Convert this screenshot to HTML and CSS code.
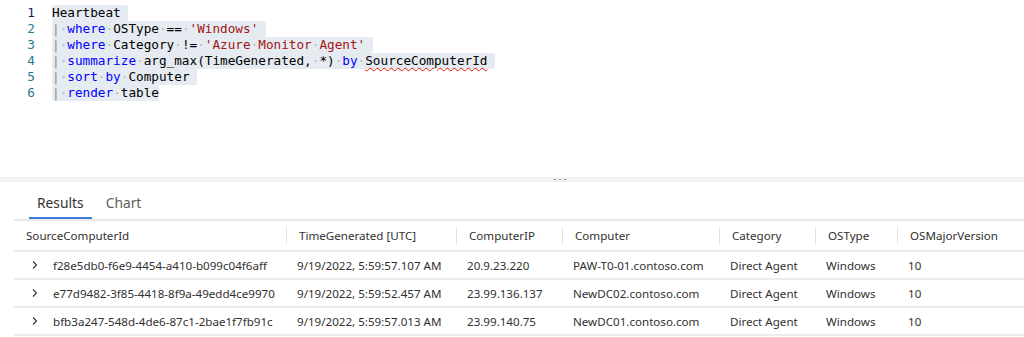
FILE: index.html
```html
<!DOCTYPE html>
<html>
<head>
<meta charset="utf-8">
<link rel="stylesheet" href="styles.css">
</head>
<body>
<div class="editor">
  <div class="line"><span class="ln active">1</span><span class="sel">Heartbeat<span class="ws">&nbsp;</span></span></div>
  <div class="line"><span class="ln">2</span><span class="sel"><span class="pipe">|</span><span class="ws">·</span><span class="kw">where</span><span class="ws">·</span>OSType<span class="ws">·</span>==<span class="ws">·</span><span class="str">'Windows'</span><span class="ws">&nbsp;</span></span></div>
  <div class="line"><span class="ln">3</span><span class="sel"><span class="pipe">|</span><span class="ws">·</span><span class="kw">where</span><span class="ws">·</span>Category<span class="ws">·</span>!=<span class="ws">·</span><span class="str">'Azure<span class="ws">·</span>Monitor<span class="ws">·</span>Agent'</span><span class="ws">&nbsp;</span></span></div>
  <div class="line"><span class="ln">4</span><span class="sel"><span class="pipe">|</span><span class="ws">·</span><span class="kw">summarize</span><span class="ws">·</span>arg_max(TimeGenerated,<span class="ws">·</span>*)<span class="ws">·</span><span class="kw">by</span><span class="ws">·</span><span class="err">SourceComputerId</span><span class="ws">&nbsp;</span></span></div>
  <div class="line"><span class="ln">5</span><span class="sel"><span class="pipe">|</span><span class="ws">·</span><span class="kw">sort</span><span class="ws">·</span><span class="kw">by</span><span class="ws">·</span>Computer<span class="ws">&nbsp;</span></span></div>
  <div class="line"><span class="ln">6</span><span class="sel"><span class="pipe">|</span><span class="ws">·</span><span class="kw">render</span><span class="ws">·</span>table</span></div>
</div>
<div class="splitter"><span class="dot"></span><span class="dot"></span><span class="dot"></span></div>
<div class="tabs">
  <div class="tab selected">Results</div>
  <div class="tab">Chart</div>
</div>
<div class="table">
  <div class="row head">
    <div class="cell c1"><span class="htext">SourceComputerId</span></div>
    <div class="cell"><span class="sep"></span><span class="htext">TimeGenerated [UTC]</span></div>
    <div class="cell"><span class="sep"></span><span class="htext">ComputerIP</span></div>
    <div class="cell"><span class="sep"></span><span class="htext">Computer</span></div>
    <div class="cell"><span class="sep"></span><span class="htext">Category</span></div>
    <div class="cell"><span class="sep"></span><span class="htext">OSType</span></div>
    <div class="cell"><span class="sep"></span><span class="htext">OSMajorVersion</span></div>
  </div>
  <div class="row data">
    <div class="cell c1"><svg class="chev" width="8" height="10" viewBox="0 0 8 10"><path d="M2 1.5 L5.5 5 L2 8.5" fill="none" stroke="#323130" stroke-width="1.1"/></svg><span class="dtext">f28e5db0-f6e9-4454-a410-b099c04f6aff</span></div>
    <div class="cell"><span class="dtext">9/19/2022, 5:59:57.107 AM</span></div>
    <div class="cell"><span class="dtext">20.9.23.220</span></div>
    <div class="cell"><span class="dtext">PAW-T0-01.contoso.com</span></div>
    <div class="cell"><span class="dtext">Direct Agent</span></div>
    <div class="cell"><span class="dtext">Windows</span></div>
    <div class="cell"><span class="dtext">10</span></div>
  </div>
  <div class="row data">
    <div class="cell c1"><svg class="chev" width="8" height="10" viewBox="0 0 8 10"><path d="M2 1.5 L5.5 5 L2 8.5" fill="none" stroke="#323130" stroke-width="1.1"/></svg><span class="dtext">e77d9482-3f85-4418-8f9a-49edd4ce9970</span></div>
    <div class="cell"><span class="dtext">9/19/2022, 5:59:52.457 AM</span></div>
    <div class="cell"><span class="dtext">23.99.136.137</span></div>
    <div class="cell"><span class="dtext">NewDC02.contoso.com</span></div>
    <div class="cell"><span class="dtext">Direct Agent</span></div>
    <div class="cell"><span class="dtext">Windows</span></div>
    <div class="cell"><span class="dtext">10</span></div>
  </div>
  <div class="row data">
    <div class="cell c1"><svg class="chev" width="8" height="10" viewBox="0 0 8 10"><path d="M2 1.5 L5.5 5 L2 8.5" fill="none" stroke="#323130" stroke-width="1.1"/></svg><span class="dtext">bfb3a247-548d-4de6-87c1-2bae1f7fb91c</span></div>
    <div class="cell"><span class="dtext">9/19/2022, 5:59:57.013 AM</span></div>
    <div class="cell"><span class="dtext">23.99.140.75</span></div>
    <div class="cell"><span class="dtext">NewDC01.contoso.com</span></div>
    <div class="cell"><span class="dtext">Direct Agent</span></div>
    <div class="cell"><span class="dtext">Windows</span></div>
    <div class="cell"><span class="dtext">10</span></div>
  </div>
</div>
</body>
</html>
```

FILE: styles.css
```css
html, body {
  margin: 0;
  padding: 0;
  background: #ffffff;
  overflow: hidden;
}
body {
  font-family: "Noto Sans", "Open Sans", sans-serif;
  color: #323130;
  width: 1024px;
  height: 337px;
}
.editor {
  height: 172px;
  padding-top: 5px;
  font-family: "DejaVu Sans Mono", "Liberation Mono", monospace;
  font-size: 12.7px;
}
.line {
  display: flex;
  height: 16px;
  line-height: 16px;
  white-space: pre;
}
.ln {
  width: 35px;
  text-align: right;
  margin-right: 17px;
  color: #237893;
}
.ln.active {
  color: #0b216f;
}
.sel {
  background: #e5ebf1;
  color: #000000;
  border-radius: 2px;
}
.ws {
  color: #b8b8b8;
}
.pipe {
  color: #8a8a8a;
}
.kw {
  color: #0000ff;
}
.str {
  color: #a31515;
}
.err {
  text-decoration: underline wavy #e51400;
  text-decoration-thickness: 1px;
  text-underline-offset: 2px;
}
.splitter {
  height: 5px;
  background: #f3f3f3;
  display: flex;
  align-items: center;
  padding-left: 554px;
  gap: 3px;
}
.dot {
  width: 2px;
  height: 1px;
  background: #8a8a8a;
}
.tabs {
  margin-left: 14px;
  height: 37px;
  border-bottom: 2px solid #e8e8e8;
  display: flex;
  align-items: stretch;
  padding-left: 15px;
}
.tab {
  font-size: 13.8px;
  padding: 6px 8px 0;
  display: flex;
  align-items: center;
  color: #605e5c;
  border-bottom: 2px solid transparent;
}
.tab.selected {
  color: #323130;
  border-bottom-color: #3b7ddd;
  margin-right: 6px;
}
.table {
  margin-left: 14px;
  font-size: 11.6px;
}
.row {
  display: grid;
  grid-template-columns: 272px 170px 106px 157px 96px 82px 1fr;
  border-bottom: 2px solid #ececec;
}
.row.head {
  height: 29px;
}
.row.data {
  height: 26px;
}
.cell {
  display: flex;
  align-items: center;
  white-space: nowrap;
  overflow: hidden;
}
.sep {
  width: 1px;
  height: 17px;
  background: #e1e1e1;
  flex: none;
}
.htext {
  margin-left: 12px;
}
.row.data .cell {
  padding-left: 11px;
}
.row.data .cell.c1 {
  padding-left: 17px;
}
.chev {
  flex: none;
  margin-right: 14px;
}
.dtext {
  color: #323130;
}
```
